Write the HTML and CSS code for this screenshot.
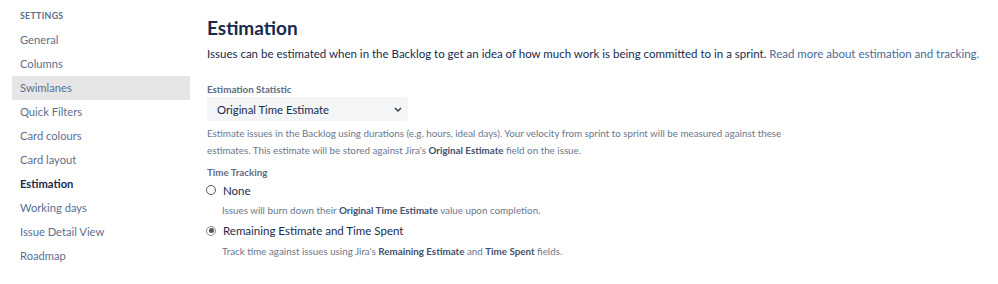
FILE: index.html
```html
<!DOCTYPE html>
<html>
<head>
<meta charset="utf-8">
<link rel="stylesheet" href="styles.css">
</head>
<body>
<div class="page">
  <nav class="sidebar">
    <div class="side-title">SETTINGS</div>
    <a class="side-item">General</a>
    <a class="side-item">Columns</a>
    <a class="side-item hover">Swimlanes</a>
    <a class="side-item">Quick Filters</a>
    <a class="side-item">Card colours</a>
    <a class="side-item">Card layout</a>
    <a class="side-item active">Estimation</a>
    <a class="side-item">Working days</a>
    <a class="side-item">Issue Detail View</a>
    <a class="side-item">Roadmap</a>
  </nav>
  <main class="content">
    <h1 class="title">Estimation</h1>
    <p class="intro">Issues can be estimated when in the Backlog to get an idea of how much work is being committed to in a sprint. <a class="link">Read more about estimation and tracking.</a></p>
    <div class="field">
      <div class="label">Estimation Statistic</div>
      <div class="select">
        <span>Original Time Estimate</span>
        <svg class="chev" width="8" height="5" viewBox="0 0 8 5"><path d="M1 1 L4 4 L7 1" fill="none" stroke="#2f3542" stroke-width="1.4"/></svg>
      </div>
      <div class="help">Estimate issues in the Backlog using durations (e.g. hours, ideal days). Your velocity from sprint to sprint will be measured against these<br>estimates. This estimate will be stored against Jira's <b>Original Estimate</b> field on the issue.</div>
    </div>
    <div class="field tt">
      <div class="label">Time Tracking</div>
      <div class="radio-row"><span class="radio"></span><span>None</span></div>
      <div class="help indent">Issues will burn down their <b>Original Time Estimate</b> value upon completion.</div>
      <div class="radio-row second"><span class="radio checked"></span><span>Remaining Estimate and Time Spent</span></div>
      <div class="help indent">Track time against issues using Jira's <b>Remaining Estimate</b> and <b>Time Spent</b> fields.</div>
    </div>
  </main>
</div>
</body>
</html>
```

FILE: styles.css
```css
* { box-sizing: border-box; }
html, body { margin: 0; padding: 0; background: #fff; }
body {
  font-family: Lato, "Noto Sans", sans-serif;
  color: #172b4d;
}
.page {
  display: flex;
  align-items: flex-start;
}
.sidebar {
  flex: none;
  width: 190px;
  padding: 9px 0 0 12px;
  display: flex;
  flex-direction: column;
}
.side-title {
  font-size: 8.8px;
  font-weight: 700;
  color: #5e6c84;
  letter-spacing: 0.3px;
  padding-left: 8px;
  height: 19px;
  line-height: 14px;
}
.side-item {
  display: block;
  height: 24px;
  line-height: 24px;
  padding-left: 8px;
  font-size: 11.2px;
  color: #5d6f8f;
  white-space: nowrap;
}
.side-item.hover { background: #e6e6e6; }
.side-item.active { color: #172b4d; font-weight: 700; }
.content {
  padding: 14px 0 0 17px;
  flex: 1;
  min-width: 0;
}
.title {
  margin: 0;
  font-size: 19px;
  font-weight: 700;
  line-height: 28px;
  color: #172b4d;
}
.intro {
  margin: 1px 0 0;
  font-size: 11.5px;
  line-height: 22px;
  color: #172b4d;
  white-space: nowrap;
}
.link { color: #4a6a96; }
.field { margin-top: 17px; }
.label {
  font-size: 9.8px;
  font-weight: 700;
  color: #5e6c84;
  line-height: 14px;
}
.select {
  margin-top: 1px;
  width: 201px;
  height: 24px;
  background: #f4f5f7;
  border-radius: 3px;
  display: flex;
  align-items: center;
  justify-content: space-between;
  padding: 0 6px 0 10px;
  font-size: 11.3px;
  color: #172b4d;
}
.chev { margin-top: 1px; }
.help {
  margin-top: 4px;
  font-size: 9.8px;
  line-height: 17px;
  color: #6b778c;
  white-space: nowrap;
}
.help b { color: #42526e; font-weight: 700; }
.tt { margin-top: 6px; }
.radio-row {
  display: flex;
  align-items: center;
  height: 20px;
  margin-top: 1px;
  font-size: 11.5px;
  color: #172b4d;
}
.radio {
  width: 10px;
  height: 10px;
  border: 1px solid #5a5a5a;
  border-radius: 50%;
  margin-left: -1px;
  margin-right: 7px;
  position: relative;
  flex: none;
}
.radio.checked { border-color: #8a8a8a; }
.radio.checked::after {
  content: "";
  position: absolute;
  left: 1.5px;
  top: 1.5px;
  width: 5px;
  height: 5px;
  border-radius: 50%;
  background: #555;
}
.help.indent { margin-top: 2px; padding-left: 15px; }
.help.indent + .radio-row { margin-top: 1.5px; }
```
